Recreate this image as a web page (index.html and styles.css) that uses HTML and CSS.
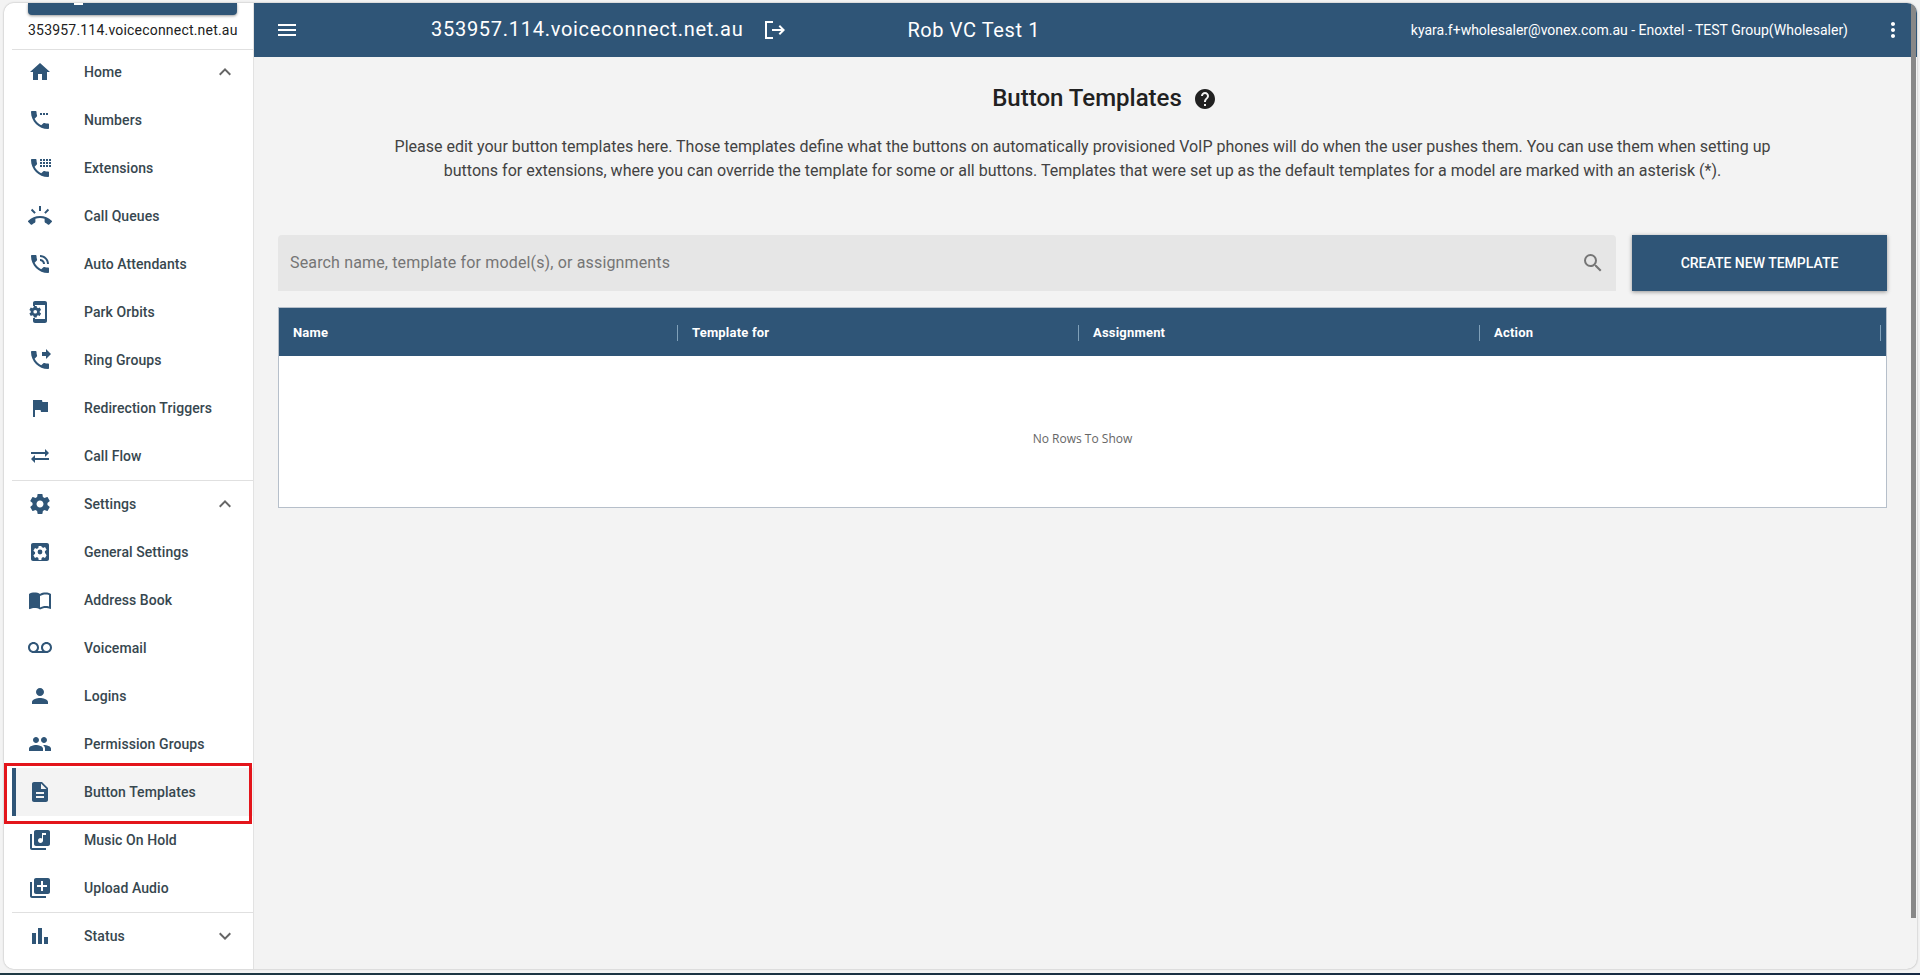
FILE: index.html
```html
<!DOCTYPE html>
<html lang="en">
<head>
<meta charset="utf-8">
<title>Button Templates</title>
<link rel="stylesheet" href="styles.css">
</head>
<body>
<div class="window">
  <aside class="sidebar">
    <div class="brand">
      <div class="brand-btn"><span class="brand-mark"></span></div>
      <div class="brand-name">353957.114.voiceconnect.net.au</div>
    </div>
    <nav class="nav">
      <a class="row row-first"><svg class="ico" viewBox="0 0 24 24"><path d="M10 20v-6h4v6h5v-8h3L12 3 2 12h3v8z"/></svg><span class="label">Home</span><svg class="chev" viewBox="0 0 24 24"><path d="M7.41 15.41 12 10.83l4.59 4.58L18 14l-6-6-6 6z"/></svg></a>
      <a class="row"><svg class="ico" viewBox="0 0 24 24"><path d="M12 5h2v2h-2zm3 0h2v2h-2zm3 0h2v2h-2zM20 15.5c-1.25 0-2.45-.2-3.57-.57-.35-.11-.74-.03-1.02.24l-2.2 2.2c-2.83-1.44-5.15-3.75-6.59-6.59l2.2-2.21c.28-.26.36-.65.25-1C8.7 6.45 8.5 5.25 8.5 4c0-.55-.45-1-1-1H4c-.55 0-1 .45-1 1 0 9.39 7.61 17 17 17 .55 0 1-.45 1-1v-3.5c0-.55-.45-1-1-1z"/></svg><span class="label">Numbers</span></a>
      <a class="row"><svg class="ico" viewBox="0 0 24 24"><path d="M20 15.5c-1.25 0-2.45-.2-3.57-.57-.35-.11-.74-.03-1.02.24l-2.2 2.2c-2.83-1.44-5.15-3.75-6.59-6.59l2.2-2.21c.28-.26.36-.65.25-1C8.7 6.45 8.5 5.25 8.5 4c0-.55-.45-1-1-1H4c-.55 0-1 .45-1 1 0 9.39 7.61 17 17 17 .55 0 1-.45 1-1v-3.5c0-.55-.45-1-1-1zM12 3h2v2h-2zm3 0h2v2h-2zm3 0h2v2h-2zm3 0h2v2h-2zM12 6h2v2h-2zm3 0h2v2h-2zm3 0h2v2h-2zm3 0h2v2h-2zM12 9h2v2h-2zm3 0h2v2h-2zm3 0h2v2h-2zm3 0h2v2h-2z"/></svg><span class="label">Extensions</span></a>
      <a class="row"><svg class="ico ico-lg" viewBox="0 0 24 24"><path d="M23.71 16.67C20.66 13.78 16.54 12 12 12S3.34 13.78.29 16.67c-.18.18-.29.43-.29.71 0 .28.11.53.29.71l2.48 2.48c.18.18.43.29.71.29.27 0 .52-.11.7-.28.79-.74 1.69-1.36 2.66-1.85.33-.16.56-.5.56-.9v-3.1c1.45-.48 3-.73 4.6-.73s3.15.25 4.6.72v3.1c0 .39.23.74.56.9.98.49 1.87 1.12 2.67 1.85.18.18.43.28.7.28.28 0 .53-.11.71-.29l2.48-2.48c.18-.18.29-.43.29-.71 0-.27-.11-.52-.29-.7zM21.16 6.26l-1.41-1.41-3.56 3.55 1.41 1.41s3.45-3.52 3.56-3.55zM13 2h-2v5h2V2zM6.4 9.81 7.81 8.4 4.26 4.84 2.84 6.26c.11.03 3.56 3.55 3.56 3.55z"/></svg><span class="label">Call Queues</span></a>
      <a class="row"><svg class="ico" viewBox="0 0 24 24"><path d="M20 15.5c-1.25 0-2.45-.2-3.57-.57-.35-.11-.74-.03-1.02.24l-2.2 2.2c-2.83-1.44-5.15-3.75-6.59-6.59l2.2-2.21c.28-.26.36-.65.25-1C8.7 6.45 8.5 5.25 8.5 4c0-.55-.45-1-1-1H4c-.55 0-1 .45-1 1 0 9.39 7.61 17 17 17 .55 0 1-.45 1-1v-3.5c0-.55-.45-1-1-1zM19 12h2c0-4.97-4.03-9-9-9v2c3.87 0 7 3.13 7 7zm-4 0h2c0-2.76-2.24-5-5-5v2c1.66 0 3 1.34 3 3z"/></svg><span class="label">Auto Attendants</span></a>
      <a class="row"><svg class="ico" viewBox="0 0 24 24"><path d="M17 1H7c-1.1 0-2 .9-2 2v3h2V5h10v14H7v-1H5v3c0 1.1.9 2 2 2h10c1.1 0 2-.9 2-2V3c0-1.1-.9-2-2-2z"/><path fill-rule="evenodd" d="M11.700 12.500c.04-.26.06-.5.06-.76s-.02-.5-.06-.76l1.400-1.100-1.400-2.400-1.650.66c-.36-.28-.74-.5-1.160-.66L8.640 6h-2.800l-.25 1.480c-.42.16-.8.38-1.160.66L2.780 7.480l-1.400 2.400 1.400 1.100c-.04.26-.06.5-.06.76s.02.5.06.76l-1.400 1.100 1.400 2.400 1.650-.66c.36.28.74.5 1.160.66l.25 1.480h2.800l.25-1.480c.42-.16.8-.38 1.160-.66l1.650.66 1.400-2.400zM7.240 13.600a1.860 1.860 0 1 1 0-3.720 1.860 1.860 0 0 1 0 3.720z"/></svg><span class="label">Park Orbits</span></a>
      <a class="row"><svg class="ico" viewBox="0 0 24 24"><path d="M18 11l5-5-5-5v3h-4v4h4zM20 15.5c-1.25 0-2.45-.2-3.57-.57-.35-.11-.74-.03-1.02.24l-2.2 2.2c-2.83-1.44-5.15-3.75-6.59-6.59l2.2-2.21c.28-.26.36-.65.25-1C8.7 6.45 8.5 5.25 8.5 4c0-.55-.45-1-1-1H4c-.55 0-1 .45-1 1 0 9.39 7.61 17 17 17 .55 0 1-.45 1-1v-3.5c0-.55-.45-1-1-1z"/></svg><span class="label">Ring Groups</span></a>
      <a class="row"><svg class="ico" viewBox="0 0 24 24"><path d="M14.4 6 14 4H5v17h2v-7h5.600l.4 2h7V6z"/></svg><span class="label">Redirection Triggers</span></a>
      <a class="row"><svg class="ico" viewBox="0 0 24 24"><path d="M6.99 11 3 15l3.990 4v-3H21v-2H6.990zM21 9l-3.990-4v3H3v2h14.010v3z"/></svg><span class="label">Call Flow</span></a>
      <a class="row row-group"><svg class="ico" viewBox="0 0 24 24"><path d="M19.43 12.98c.04-.32.07-.64.07-.98s-.03-.66-.07-.98l2.11-1.65c.19-.15.24-.42.12-.64l-2-3.46c-.12-.22-.39-.3-.61-.22l-2.49 1c-.52-.4-1.08-.73-1.69-.98l-.38-2.65C14.46 2.18 14.25 2 14 2h-4c-.25 0-.46.18-.49.42l-.38 2.65c-.61.25-1.17.59-1.69.98l-2.49-1c-.23-.09-.49 0-.61.22l-2 3.46c-.13.22-.07.49.12.64l2.11 1.65c-.04.32-.07.65-.07.98s.03.66.07.98l-2.11 1.65c-.19.15-.24.42-.12.64l2 3.46c.12.22.39.3.61.22l2.49-1c.52.4 1.08.73 1.69.98l.38 2.65c.03.24.24.42.49.42h4c.25 0 .46-.18.49-.42l.38-2.65c.61-.25 1.17-.59 1.69-.98l2.49 1c.23.09.49 0 .61-.22l2-3.46c.12-.22.07-.49-.12-.64l-2.11-1.65zM12 15.5c-1.93 0-3.5-1.57-3.5-3.5s1.57-3.5 3.5-3.5 3.5 1.57 3.5 3.5-1.57 3.500-3.500 3.500z"/></svg><span class="label">Settings</span><svg class="chev" viewBox="0 0 24 24"><path d="M7.41 15.41 12 10.83l4.59 4.58L18 14l-6-6-6 6z"/></svg></a>
      <a class="row"><svg class="ico" viewBox="0 0 24 24"><path fill-rule="evenodd" d="M5 3h14c1.100 0 2 .9 2 2v14c0 1.100-.9 2-2 2H5c-1.100 0-2-.9-2-2V5c0-1.100.9-2 2-2zm11.900 9.800c.04-.26.06-.52.06-.8s-.02-.54-.06-.8l1.700-1.330-1.600-2.770-2 .8c-.42-.32-.86-.58-1.350-.78L13.350 6h-2.700l-.3 2.120c-.49.2-.93.46-1.350.78l-2-.8-1.600 2.770 1.700 1.330c-.04.26-.06.52-.06.8s.02.54.06.8l-1.700 1.330 1.600 2.770 2-.8c.42.32.86.58 1.350.78l.3 2.120h2.700l.3-2.120c.49-.2.93-.46 1.350-.78l2 .8 1.600-2.770zM12 14.400a2.400 2.400 0 1 1 0-4.800 2.400 2.400 0 0 1 0 4.800z"/></svg><span class="label">General Settings</span></a>
      <a class="row"><svg class="ico" viewBox="0 0 24 24"><path d="M21 5c-1.110-.35-2.330-.5-3.500-.5-1.950 0-4.050.4-5.500 1.500-1.450-1.100-3.550-1.500-5.500-1.500S2.450 4.900 1 6v14.650c0 .25.25.5.5.5.1 0 .15-.05.25-.05C3.100 20.450 5.050 20 6.500 20c1.950 0 4.050.4 5.500 1.500 1.350-.85 3.800-1.500 5.500-1.500 1.650 0 3.350.3 4.750 1.050.1.05.15.05.25.05.25 0 .5-.25.5-.5V6c-.6-.45-1.250-.75-2-1zm0 13.500c-1.100-.35-2.300-.5-3.500-.5-1.700 0-4.150.65-5.500 1.500V8c1.350-.85 3.800-1.500 5.500-1.500 1.200 0 2.400.15 3.500.5v11.500z"/></svg><span class="label">Address Book</span></a>
      <a class="row"><svg class="ico" viewBox="0 0 24 24"><path d="M18.500 6C15.460 6 13 8.460 13 11.500c0 1.330.47 2.550 1.260 3.500H9.740c.79-.95 1.260-2.170 1.260-3.500C11 8.460 8.540 6 5.500 6S0 8.460 0 11.500 2.460 17 5.500 17h13c3.040 0 5.500-2.460 5.500-5.500S21.540 6 18.500 6zm-13 9C3.570 15 2 13.430 2 11.500S3.570 8 5.500 8 9 9.570 9 11.500 7.430 15 5.500 15zm13 0c-1.930 0-3.500-1.570-3.500-3.500S16.570 8 18.500 8 22 9.570 22 11.500 20.430 15 18.500 15z"/></svg><span class="label">Voicemail</span></a>
      <a class="row"><svg class="ico" viewBox="0 0 24 24"><path d="M12 12c2.210 0 4-1.790 4-4s-1.790-4-4-4-4 1.790-4 4 1.790 4 4 4zm0 2c-2.670 0-8 1.340-8 4v2h16v-2c0-2.660-5.330-4-8-4z"/></svg><span class="label">Logins</span></a>
      <a class="row"><svg class="ico" viewBox="0 0 24 24"><path d="M16 11c1.660 0 2.990-1.340 2.990-3S17.660 5 16 5c-1.660 0-3 1.340-3 3s1.340 3 3 3zm-8 0c1.660 0 2.990-1.340 2.990-3S9.660 5 8 5C6.340 5 5 6.340 5 8s1.340 3 3 3zm0 2c-2.330 0-7 1.170-7 3.500V19h14v-2.500c0-2.330-4.670-3.500-7-3.500zm8 0c-.29 0-.62.02-.97.05 1.160.84 1.970 1.970 1.970 3.450V19h6v-2.500c0-2.330-4.670-3.500-7-3.500z"/></svg><span class="label">Permission Groups</span></a>
      <a class="row row-active"><svg class="ico" viewBox="0 0 24 24"><path d="M14 2H6c-1.100 0-1.990.9-1.990 2L4 20c0 1.100.89 2 1.990 2H18c1.100 0 2-.9 2-2V8l-6-6zm2 16H8v-2h8v2zm0-4H8v-2h8v2zm-3-5V3.500L18.500 9H13z"/></svg><span class="label">Button Templates</span></a>
      <a class="row"><svg class="ico" viewBox="0 0 24 24"><path d="M20 2H8c-1.100 0-2 .9-2 2v12c0 1.100.9 2 2 2h12c1.100 0 2-.9 2-2V4c0-1.100-.9-2-2-2zm-2 5h-3v5.500c0 1.380-1.120 2.500-2.500 2.500S10 13.880 10 12.500s1.120-2.500 2.500-2.500c.57 0 1.080.19 1.500.51V5h4v2zM4 6H2v14c0 1.100.9 2 2 2h14v-2H4V6z"/></svg><span class="label">Music On Hold</span></a>
      <a class="row"><svg class="ico" viewBox="0 0 24 24"><path d="M4 6H2v14c0 1.100.9 2 2 2h14v-2H4V6zm16-4H8c-1.100 0-2 .9-2 2v12c0 1.100.9 2 2 2h12c1.100 0 2-.9 2-2V4c0-1.100-.9-2-2-2zm-1 9h-4v4h-2v-4H9V9h4V5h2v4h4v2z"/></svg><span class="label">Upload Audio</span></a>
      <a class="row row-group"><svg class="ico" viewBox="0 0 24 24"><path d="M4 9h4v11H4zM16 13h4v7h-4zM10 4h4v16h-4z"/></svg><span class="label">Status</span><svg class="chev" viewBox="0 0 24 24"><path d="M16.590 8.590 12 13.170 7.410 8.590 6 10l6 6 6-6z"/></svg></a>
    </nav>
    <div class="annotation"></div>
  </aside>
  <div class="content">
    <header class="topbar">
      <svg class="top-menu" viewBox="0 0 24 24"><path d="M3 18h18v-2H3v2zm0-5h18v-2H3v2zm0-7v2h18V6H3z"/></svg>
      <span class="top-domain">353957.114.voiceconnect.net.au</span>
      <svg class="top-exit" viewBox="0 0 24 24"><path d="M2 3h8v2H4v14h6v2H2zM17 7l5 5-5 5-1.400-1.400 2.600-2.600H9v-2h9.200l-2.600-2.600z"/></svg>
      <span class="top-name">Rob VC Test 1</span>
      <span class="top-user">kyara.f+wholesaler@vonex.com.au - Enoxtel - TEST Group(Wholesaler)</span>
      <svg class="top-more" viewBox="0 0 24 24"><path d="M12 8c1.100 0 2-.9 2-2s-.9-2-2-2-2 .9-2 2 .9 2 2 2zm0 2c-1.100 0-2 .9-2 2s.9 2 2 2 2-.9 2-2-.9-2-2-2zm0 6c-1.100 0-2 .9-2 2s.9 2 2 2 2-.9 2-2-.9-2-2-2z"/></svg>
    </header>
    <main class="main">
      <div class="title-row">
        <h1 class="title">Button Templates</h1>
        <svg class="help" viewBox="0 0 24 24"><path d="M12 2C6.480 2 2 6.480 2 12s4.480 10 10 10 10-4.480 10-10S17.520 2 12 2zm1 17h-2v-2h2v2zm2.070-7.750-.9.920C13.450 12.900 13 13.500 13 15h-2v-.5c0-1.100.45-2.100 1.170-2.830l1.240-1.260c.37-.36.59-.86.59-1.410 0-1.100-.9-2-2-2s-2 .9-2 2H8c0-2.210 1.790-4 4-4s4 1.790 4 4c0 .88-.36 1.680-.93 2.250z"/></svg>
      </div>
      <p class="intro">Please edit your button templates here. Those templates define what the buttons on automatically provisioned VoIP phones will do when the user pushes them. You can use them when setting up<br>buttons for extensions, where you can override the template for some or all buttons. Templates that were set up as the default templates for a model are marked with an asterisk (*).</p>
      <div class="tools">
        <div class="search">
          <span class="placeholder">Search name, template for model(s), or assignments</span>
          <svg class="search-ico" viewBox="0 0 24 24"><path d="M15.500 14h-.79l-.28-.27A6.471 6.471 0 0 0 16 9.500 6.500 6.500 0 1 0 9.500 16c1.610 0 3.090-.59 4.230-1.570l.27.28v.79l5 4.990L20.490 19l-4.990-5zm-6 0C7.010 14 5 11.990 5 9.500S7.010 5 9.500 5 14 7.010 14 9.500 11.990 14 9.500 14z"/></svg>
        </div>
        <button class="create">CREATE NEW TEMPLATE</button>
      </div>
      <section class="grid">
        <div class="grid-head">
          <div class="col">Name</div>
          <div class="col">Template for</div>
          <div class="col">Assignment</div>
          <div class="col">Action</div>
        </div>
        <div class="grid-body">No Rows To Show</div>
      </section>
    </main>
    <div class="scrollbar"></div>
  </div>
</div>
<div class="taskbar"></div>
</body>
</html>
```
FILE: styles.css
```css
* { box-sizing: border-box; }
html, body { margin: 0; height: 100%; overflow: hidden; }
body {
  font-family: Roboto, "Liberation Sans", sans-serif;
  display: flex;
  flex-direction: column;
  padding-top: 3px;
  background-color: #f3f3f3;
}
.window {
  height: 966px;
  margin: 0 3px 0 4px;
  display: flex;
  border-radius: 10px;
  overflow: hidden;
  background: #f3f3f3;
  box-shadow: 0 0 2px rgba(0,0,0,.35);
}
.taskbar { height: 2px; margin-top: auto; background: linear-gradient(90deg, #1f3a44, #172a43); }
.sidebar {
  width: 250px;
  flex: none;
  background: #fff;
  position: relative;
  border-right: 1px solid #e2e2e2;
}
.brand { height: 45px; padding: 0 15px 0 24px; }
.brand-btn {
  height: 12px;
  width: 209px;
  background: #2f5577;
  border-radius: 0 0 4px 4px;
  box-shadow: 0 1px 3px rgba(0,0,0,.4);
  position: relative;
}
.brand-mark {
  position: absolute;
  left: 46px;
  top: 0;
  width: 9px;
  height: 2px;
  background: #fff;
}
.brand-name {
  margin-top: 6px;
  width: 209px;
  font-size: 14px;
  line-height: 18px;
  color: #212121;
  white-space: nowrap;
  letter-spacing: .2px;
}
.nav { margin-left: 8px; }
.row {
  height: 48px;
  display: flex;
  align-items: center;
  padding-left: 16px;
  padding-right: 16px;
  color: #37474f;
  font-size: 14px;
  font-weight: 500;
  letter-spacing: .07px;
}
.row-first { background: linear-gradient(#e0e0e0, #e0e0e0) 0 1px / 100% 1px no-repeat; }
.row-group { box-shadow: inset 0 1px #e0e0e0; }
.row-active {
  background: #f3f3f3;
  border-left: 4px solid #2f5577;
  padding-left: 12px;
}
.ico { width: 24px; height: 24px; fill: #2f5577; flex: none; }
.label { margin-left: 32px; flex: 1; }
.chev { width: 24px; height: 24px; fill: #666; flex: none; }
.annotation {
  position: absolute;
  left: 0;
  top: 760px;
  width: 248px;
  height: 61px;
  border: 3px solid #e3151b;
  pointer-events: none;
}
.content { flex: 1; min-width: 0; display: flex; flex-direction: column; position: relative; }
.topbar {
  height: 54px;
  flex: none;
  background: #2f5577;
  color: #fff;
  display: flex;
  align-items: center;
  padding-left: 21px;
  padding-right: 12px;
}
.top-menu { width: 24px; height: 24px; fill: #fff; flex: none; margin-right: 132px; }
.top-domain { font-size: 20px; letter-spacing: .72px; white-space: nowrap; margin-bottom: 2px; }
.top-exit { width: 24px; height: 24px; fill: #fff; flex: none; margin-left: 20px; }
.top-name { font-size: 20px; letter-spacing: .6px; margin-left: 120px; white-space: nowrap; }
.top-user { font-size: 14px; margin-left: auto; white-space: nowrap; }
.top-more { width: 24px; height: 24px; fill: #fff; flex: none; margin-left: 33px; }
.main { flex: 1; padding: 0 30px 0 24px; }
.title-row { height: 70px; display: flex; align-items: center; justify-content: center; gap: 11px; padding: 11px 0 0 44px; }
.title { margin: 0; font-size: 24px; font-weight: 500; color: #212121; line-height: 32px; }
.help { width: 24px; height: 24px; fill: #212121; flex: none; margin-top: 3px; }
.intro { margin: 0; font-size: 16px; line-height: 24px; color: #424242; text-align: center; padding-top: 8px; }
.tools { display: flex; gap: 16px; margin-top: 52px; height: 56px; }
.search {
  flex: 1;
  background: #e6e6e6;
  border-radius: 4px 4px 0 0;
  display: flex;
  align-items: center;
  padding: 0 11px 0 12px;
}
.placeholder { flex: 1; font-size: 16px; letter-spacing: .15px; color: #757575; padding-bottom: 2px; }
.search-ico { width: 24px; height: 24px; fill: #757575; flex: none; }
.create {
  width: 255px;
  border: 0;
  background: #2f5577;
  color: #fff;
  font: 500 14px Roboto, sans-serif;
  box-shadow: 0 1px 4px rgba(0,0,0,.4);
  padding: 0;
}
.grid { margin-top: 16px; height: 201px; border: 1px solid #b6bfca; background: #fff; }
.grid-head {
  height: 48px;
  background: #2f5577;
  display: grid;
  grid-template-columns: 399px repeat(3, 401px);
  align-items: center;
}
.col {
  color: #fff;
  font-size: 13px;
  font-weight: 700;
  letter-spacing: .2px;
  padding-left: 14px;
  position: relative;
}
.col::after {
  content: "";
  position: absolute;
  right: 0;
  top: 0;
  height: 16px;
  width: 1px;
  background: #80a0b9;
}
.grid-body {
  height: 151px;
  display: flex;
  align-items: center;
  justify-content: center;
  font-size: 12px;
  color: #666;
  font-family: "Open Sans", sans-serif;
  padding-top: 14px;
}
.scrollbar {
  position: absolute;
  top: 0;
  right: 1px;
  width: 5px;
  height: 915px;
  background: #888;
}
```
